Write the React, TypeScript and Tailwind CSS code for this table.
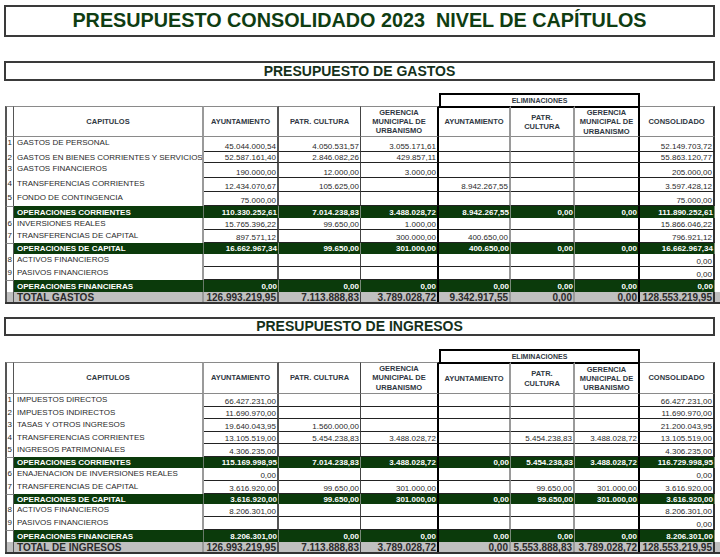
import React from "react";

const GRID =
  "grid grid-rows-1 grid-cols-[9px_190px_75px_82px_78px_72px_64px_65px_75px]";

const RB = [
  "border-r border-r-[#555]",
  "border-r-2 border-r-[#9a9a9a]",
  "border-r-2 border-r-[#555]",
  "border-r border-r-[#444]",
  "border-r-2 border-r-black",
  "border-r-2 border-r-[#9a9a9a]",
  "border-r-2 border-r-[#9a9a9a]",
  "border-r-2 border-r-black",
  "border-r-2 border-r-[#333]",
];

type Row =
  | { kind: "data"; n: string; label: string; vals: string[]; h: string }
  | { kind: "band"; label: string; vals: string[]; h: string }
  | { kind: "total"; label: string; vals: string[]; h: string };

const gastos: Row[] = [
  { kind: "data", n: "1", label: "GASTOS DE PERSONAL", vals: ["45.044.000,54", "4.050.531,57", "3.055.171,61", "", "", "", "52.149.703,72"], h: "h-[15px]" },
  { kind: "data", n: "2", label: "GASTOS EN BIENES CORRIENTES Y SERVICIOS", vals: ["52.587.161,40", "2.846.082,26", "429.857,11", "", "", "", "55.863.120,77"], h: "h-[11px]" },
  { kind: "data", n: "3", label: "GASTOS FINANCIEROS", vals: ["190.000,00", "12.000,00", "3.000,00", "", "", "", "205.000,00"], h: "h-[15px]" },
  { kind: "data", n: "4", label: "TRANSFERENCIAS CORRIENTES", vals: ["12.434.070,67", "105.625,00", "", "8.942.267,55", "", "", "3.597.428,12"], h: "h-[14px]" },
  { kind: "data", n: "5", label: "FONDO DE CONTINGENCIA", vals: ["75.000,00", "", "", "", "", "", "75.000,00"], h: "h-[14px]" },
  { kind: "band", label: "OPERACIONES CORRIENTES", vals: ["110.330.252,61", "7.014.238,83", "3.488.028,72", "8.942.267,55", "0,00", "0,00", "111.890.252,61"], h: "h-[12px]" },
  { kind: "data", n: "6", label: "INVERSIONES REALES", vals: ["15.765.396,22", "99.650,00", "1.000,00", "", "", "", "15.866.046,22"], h: "h-[12px]" },
  { kind: "data", n: "7", label: "TRANSFERENCIAS DE CAPITAL", vals: ["897.571,12", "", "300.000,00", "400.650,00", "", "", "796.921,12"], h: "h-[13px]" },
  { kind: "band", label: "OPERACIONES DE CAPITAL", vals: ["16.662.967,34", "99.650,00", "301.000,00", "400.650,00", "0,00", "0,00", "16.662.967,34"], h: "h-[11px]" },
  { kind: "data", n: "8", label: "ACTIVOS FINANCIEROS", vals: ["", "", "", "", "", "", "0,00"], h: "h-[13px]" },
  { kind: "data", n: "9", label: "PASIVOS FINANCIEROS", vals: ["", "", "", "", "", "", "0,00"], h: "h-[13px]" },
  { kind: "band", label: "OPERACIONES FINANCIERAS", vals: ["0,00", "0,00", "0,00", "0,00", "0,00", "0,00", "0,00"], h: "h-[12px]" },
  { kind: "total", label: "TOTAL GASTOS", vals: ["126.993.219,95", "7.113.888,83", "3.789.028,72", "9.342.917,55", "0,00", "0,00", "128.553.219,95"], h: "h-[12px]" },
];

const ingresos: Row[] = [
  { kind: "data", n: "1", label: "IMPUESTOS DIRECTOS", vals: ["66.427.231,00", "", "", "", "", "", "66.427.231,00"], h: "h-[13px]" },
  { kind: "data", n: "2", label: "IMPUESTOS INDIRECTOS", vals: ["11.690.970,00", "", "", "", "", "", "11.690.970,00"], h: "h-[12px]" },
  { kind: "data", n: "3", label: "TASAS Y OTROS INGRESOS", vals: ["19.640.043,95", "1.560.000,00", "", "", "", "", "21.200.043,95"], h: "h-[13px]" },
  { kind: "data", n: "4", label: "TRANSFERENCIAS CORRIENTES", vals: ["13.105.519,00", "5.454.238,83", "3.488.028,72", "", "5.454.238,83", "3.488.028,72", "13.105.519,00"], h: "h-[12px]" },
  { kind: "data", n: "5", label: "INGRESOS PATRIMONIALES", vals: ["4.306.235,00", "", "", "", "", "", "4.306.235,00"], h: "h-[13px]" },
  { kind: "band", label: "OPERACIONES CORRIENTES", vals: ["115.169.998,95", "7.014.238,83", "3.488.028,72", "0,00", "5.454.238,83", "3.488.028,72", "116.729.998,95"], h: "h-[11px]" },
  { kind: "data", n: "6", label: "ENAJENACION DE INVERSIONES REALES", vals: ["0,00", "", "", "", "", "", "0,00"], h: "h-[13px]" },
  { kind: "data", n: "7", label: "TRANSFERENCIAS DE CAPITAL", vals: ["3.616.920,00", "99.650,00", "301.000,00", "", "99.650,00", "301.000,00", "3.616.920,00"], h: "h-[13px]" },
  { kind: "band", label: "OPERACIONES DE CAPITAL", vals: ["3.616.920,00", "99.650,00", "301.000,00", "0,00", "99.650,00", "301.000,00", "3.616.920,00"], h: "h-[10px]" },
  { kind: "data", n: "8", label: "ACTIVOS FINANCIEROS", vals: ["8.206.301,00", "", "", "", "", "", "8.206.301,00"], h: "h-[13px]" },
  { kind: "data", n: "9", label: "PASIVOS FINANCIEROS", vals: ["", "", "", "", "", "", "0,00"], h: "h-[13px]" },
  { kind: "band", label: "OPERACIONES FINANCIERAS", vals: ["8.206.301,00", "0,00", "0,00", "0,00", "0,00", "0,00", "8.206.301,00"], h: "h-[12px]" },
  { kind: "total", label: "TOTAL DE INGRESOS", vals: ["126.993.219,95", "7.113.888,83", "3.789.028,72", "0,00", "5.553.888,83", "3.789.028,72", "128.553.219,95"], h: "h-[12px]" },
];

function TableRow({ row }: { row: Row }) {
  if (row.kind === "data") {
    return (
      <div className={`${GRID} ${row.h} text-[8px] leading-[9px] text-[#2a2a2a]`}>
        <div className={`${RB[0]} border-l-2 border-l-[#555] flex items-start justify-end pr-[1px] pt-[1px]`}>
          {row.n}
        </div>
        <div className={`${RB[1]} flex items-start pl-[3px] pt-[1px] whitespace-nowrap overflow-hidden`}>
          {row.label}
        </div>
        {row.vals.map((v, i) => (
          <div
            key={i}
            className={`${RB[i + 2]} border-b border-b-[#222] flex items-end justify-end pr-[1px] whitespace-nowrap`}
          >
            {v}
          </div>
        ))}
      </div>
    );
  }
  if (row.kind === "band") {
    return (
      <div className={`${GRID} ${row.h} text-[8px] leading-[9px] font-bold text-white`}>
        <div className={`${RB[0]} border-l-2 border-l-[#555] border-t border-t-[#888] bg-white`} />
        <div className={`border-r border-r-[#6a7a6a] bg-[#0b3a0b] flex items-center pl-[3px] whitespace-nowrap`}>
          {row.label}
        </div>
        {row.vals.map((v, i) => (
          <div
            key={i}
            className={`${i === 2 || i === 5 ? "border-r-2 border-r-black" : "border-r border-r-[#7a8a7a]"} bg-[#0b3a0b] flex items-center justify-end pr-[1px] whitespace-nowrap`}
          >
            {v}
          </div>
        ))}
      </div>
    );
  }
  return (
    <div className={`${GRID} ${row.h} text-[10px] leading-[11px] font-bold text-[#2b2b2b] bg-[#c0c0c0] border-b-2 border-b-[#333]`}>
      <div className={`${RB[0]} border-l-2 border-l-[#555]`} />
      <div className={`${RB[1]} flex items-center pl-[3px] whitespace-nowrap`}>{row.label}</div>
      {row.vals.map((v, i) => (
        <div
          key={i}
          className={`${RB[i + 2]} flex items-center justify-end pr-[1px] whitespace-nowrap`}
        >
          {v}
        </div>
      ))}
    </div>
  );
}

function HeaderRows({ headH }: { headH: string }) {
  const hcell =
    "flex items-center justify-center text-center text-[7.5px] leading-[9.3px] font-bold text-[#2f3742] border-t border-t-[#8a8a8a] border-b border-b-[#8a8a8a]";
  return (
    <>
      <div className={`${GRID} h-[13px]`}>
        <div className="col-span-5" />
        <div className="col-span-3 border-2 border-black border-b-0 flex items-center justify-center text-[7px] font-bold text-[#2f3742] leading-[9px]">
          ELIMINACIONES
        </div>
        <div />
      </div>
      <div className={`${GRID} ${headH}`}>
        <div className={`${RB[0]} ${hcell} border-l-2 border-l-[#555]`} />
        <div className={`${RB[1]} ${hcell}`}>CAPITULOS</div>
        <div className={`${RB[2]} ${hcell}`}>AYUNTAMIENTO</div>
        <div className={`${RB[3]} ${hcell}`}>PATR. CULTURA</div>
        <div className={`${RB[4]} ${hcell}`}>
          GERENCIA
          <br />
          MUNICIPAL DE
          <br />
          URBANISMO
        </div>
        <div className={`${RB[5]} ${hcell} border-t-2 border-t-black`}>AYUNTAMIENTO</div>
        <div className={`${RB[6]} ${hcell} border-t-2 border-t-black`}>
          PATR.
          <br />
          CULTURA
        </div>
        <div className={`${RB[7]} ${hcell} border-t-2 border-t-black`}>
          GERENCIA
          <br />
          MUNICIPAL DE
          <br />
          URBANISMO
        </div>
        <div className={`${RB[8]} ${hcell}`}>CONSOLIDADO</div>
      </div>
    </>
  );
}

export default function App() {
  return (
    <div
      className="w-[720px] h-[557px] bg-white overflow-hidden"
      style={{ fontFamily: '"Liberation Sans", Arial, sans-serif' }}
    >
      <div className="pt-[5px] pl-[4px]">
        <div className="w-[711px] h-[32px] border-2 border-[#3a3a3a] flex items-center justify-center text-[19.8px] font-bold text-[#0f3d12] whitespace-pre">
          {"PRESUPUESTO CONSOLIDADO 2023  NIVEL DE CAPÍTULOS"}
        </div>
        <div className="mt-[24px] w-[711px] h-[20px] border-2 border-[#3a3a3a] flex items-center justify-center text-[14px] font-bold text-[#14301a]">
          PRESUPUESTO DE GASTOS
        </div>
      </div>
      <div className="pl-[5px] mt-[12px]">
        <HeaderRows headH="h-[31px]" />
        {gastos.map((r, i) => (
          <TableRow key={i} row={r} />
        ))}
      </div>
      <div className="pl-[4px] mt-[13px]">
        <div className="w-[711px] h-[19px] border-2 border-[#3a3a3a] flex items-center justify-center text-[14px] font-bold text-[#14301a]">
          PRESUPUESTO DE INGRESOS
        </div>
      </div>
      <div className="pl-[5px] mt-[13px]">
        <HeaderRows headH="h-[32px]" />
        {ingresos.map((r, i) => (
          <TableRow key={i} row={r} />
        ))}
      </div>
    </div>
  );
}
